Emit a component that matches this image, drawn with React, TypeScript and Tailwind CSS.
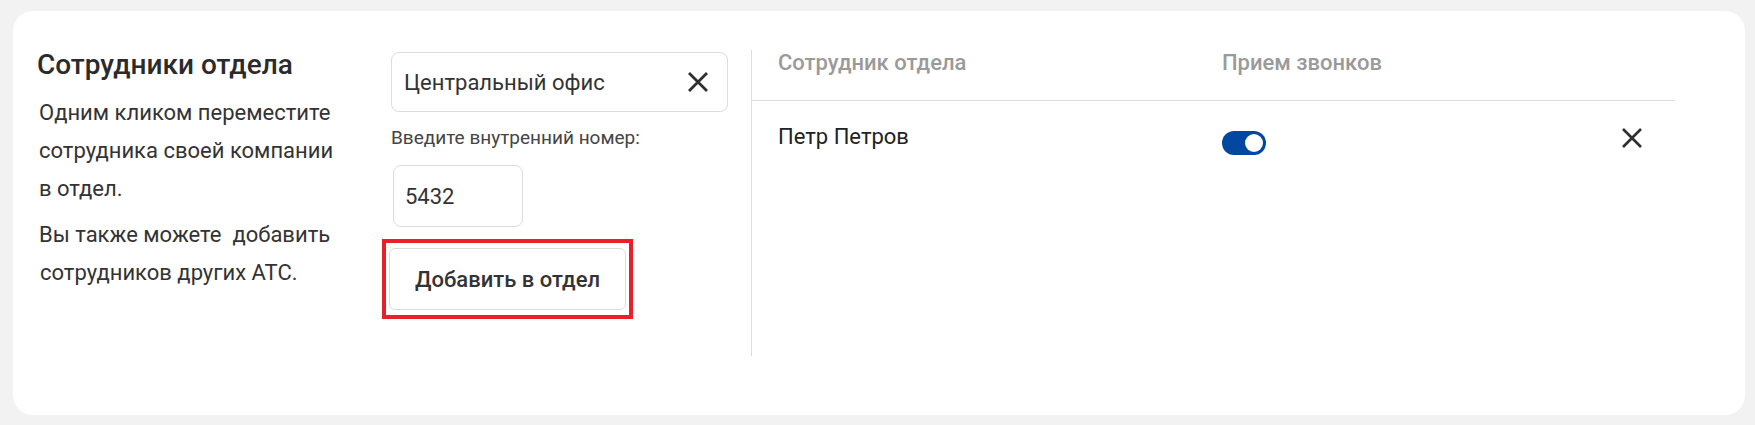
import React from 'react'

const CloseIcon = ({ size = 22, stroke = 2.6 }: { size?: number; stroke?: number }) => (
  <svg width={size} height={size} viewBox="0 0 22 22" fill="none">
    <path d="M2 2 L20 20 M20 2 L2 20" stroke="#2f2f2f" strokeWidth={stroke} strokeLinecap="butt" />
  </svg>
)

const Toggle = () => (
  <div className="flex items-center justify-end w-[44px] h-[24px] rounded-full bg-[#0047a0] pr-[3px]">
    <div className="w-[18px] h-[18px] rounded-full bg-white" />
  </div>
)

const App = () => {
  return (
    <div className="w-[1755px] h-[425px] bg-[#f1f2f1] pt-[11px] pl-[13px] pr-[10px] pb-[10px] font-['Roboto',sans-serif]">
      <div className="flex h-[404px] rounded-[20px] bg-white pl-[24px] pt-[39px]">

        {/* описание */}
        <div className="w-[345px] shrink-0 text-[#333]">
          <h2 className="text-[28px] leading-[32px] font-medium text-[#2b2b2b] -mt-[1px]">Сотрудники отдела</h2>
          <p className="mt-[13px] text-[22px] leading-[38px] pl-[2px]">
            Одним кликом переместите
            <br />
            сотрудника своей компании
            <br />в отдел.
          </p>
          <p className="mt-[8px] text-[22px] leading-[38px] pl-[2px]">
            Вы также можете&nbsp; добавить
            <br />
            <span className="pl-[1px]">сотрудников других АТС.</span>
          </p>
        </div>

        {/* форма */}
        <div className="w-[346px] shrink-0 flex flex-col pt-[2px]">
          <div className="ml-[9px] flex items-center justify-between h-[60px] w-[337px] rounded-[8px] border border-[#dcdcdc] pl-[12px] pr-[18px]">
            <span className="text-[22px] text-[#333]">Центральный офис</span>
            <CloseIcon size={22} stroke={2.8} />
          </div>
          <label className="ml-[9px] mt-[15px] text-[19px] leading-[22px] text-[#444]">Введите внутренний номер:</label>
          <div className="ml-[11px] mt-[16px] flex items-center h-[62px] w-[130px] rounded-[8px] border border-[#dcdcdc] pl-[11px]">
            <span className="text-[22px] text-[#333]">5432</span>
          </div>
          <div className="mt-[12px] w-[251px] border-[4px] border-[#e8202a] px-[3px] pt-[5px] pb-[5px]">
            <button className="w-full h-[62px] rounded-[6px] border border-[#dcdcdc] bg-white text-[22px] font-medium text-[#333]">
              Добавить в отдел
            </button>
          </div>
        </div>

        {/* таблица */}
        <div className="ml-[23px] w-[924px] h-[306px] border-l border-[#dcdcdc]">
          <div className="flex h-[51px] border-b border-[#dcdcdc] pt-[1px] text-[22px] leading-[24px] font-medium text-[#9a9a9a]">
            <div className="w-[470px] pl-[26px]">Сотрудник отдела</div>
            <div className="flex-1">Прием звонков</div>
          </div>
          <div className="flex items-center pt-[22px]">
            <div className="w-[470px] pl-[26px] text-[22px] leading-[24px] text-[#222] -mt-[4px]">Петр Петров</div>
            <div className="w-[399px] mt-[8px]">
              <Toggle />
            </div>
            <div className="mt-[-2px]">
              <CloseIcon size={22} stroke={2.6} />
            </div>
          </div>
        </div>
      </div>
    </div>
  )
}

export default App
